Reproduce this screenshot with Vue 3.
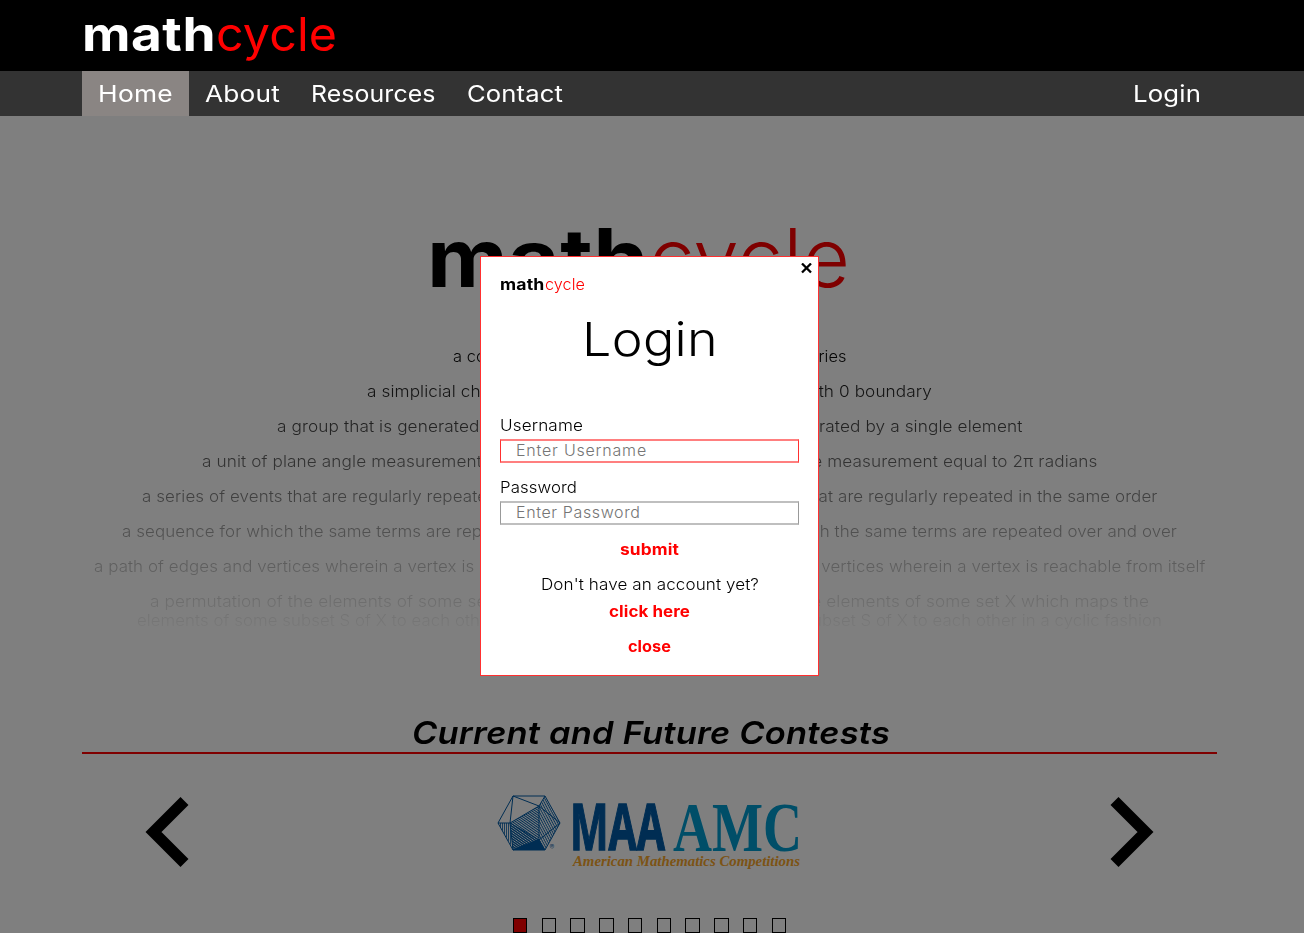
<script setup>
import { ref } from 'vue'

// Widens a run of text, slightly by tracking and mostly by stretching, to the given width.
const vFit = {
  mounted(el, { value }) {
    const natural = el.getBoundingClientRect().width
    el.style.letterSpacing = `${((value - natural) * 0.1) / el.textContent.length}px`
    const tracked = el.getBoundingClientRect().width
    el.style.transform = `scaleX(${value / tracked})`
    el.style.marginRight = `${value - tracked}px`
  }
}

const links = [
  { label: 'Home', box: 107, text: 75 },
  { label: 'About', box: 106, text: 75 },
  { label: 'Resources', box: 156, text: 124.5 },
  { label: 'Contact', box: 127, text: 96 }
]

const definitions = [
  [{ text: 'a complete set of stories', width: 188.5 }],
  [{ text: 'a simplicial chain with 0 boundary', width: 274 }],
  [{ text: 'a group that is generated by a single element', width: 364.5 }],
  [{ text: 'a unit of plane angle measurement equal to 2π radians', width: 439.5 }],
  [{ text: 'a series of events that are regularly repeated in the same order', width: 499.5 }],
  [{ text: 'a sequence for which the same terms are repeated over and over', width: 519 }],
  [{ text: 'a path of edges and vertices wherein a vertex is reachable from itself', width: 547.5 }],
  [
    { text: 'a permutation of the elements of some set X which maps the', width: 491 },
    { text: 'elements of some subset S of X to each other in a cyclic fashion', width: 504 }
  ]
]

const slide = ref(0)
const username = ref('')
const password = ref('')
</script>

<template>
  <div class="page">
    <header>
      <div class="brand">
        <span v-fit="134" class="math">math</span><span v-fit="121" class="cycle">cycle</span>
      </div>
      <nav>
        <a v-for="(l, i) in links" :key="l.label" :class="{ active: i === 0 }" :style="{ width: l.box + 'px' }"><span v-fit="l.text">{{ l.label }}</span></a>
        <a class="login-link"><span v-fit="68">Login</span></a>
      </nav>
    </header>

    <main>
      <h1 class="hero"><span v-fit="222" class="math">math</span><span v-fit="201" class="cycle">cycle</span></h1>
      <div class="definitions">
        <div v-for="(d, i) in definitions" :key="i" class="definition">
          <div v-for="line in d" :key="line.text" class="line">
            <span v-fit="line.width">{{ line.text }}</span>
            <span v-fit="line.width">{{ line.text }}</span>
          </div>
        </div>
      </div>

      <h2><span v-fit="478">Current and Future Contests</span></h2>

      <section class="carousel">
        <svg class="arrow" width="44" height="70" viewBox="0 0 44 70"><path d="M39.5 4 8.500 35l31 31" /></svg>
        <svg class="amc" width="308" height="80" viewBox="0 0 308 80">
          <defs>
            <pattern id="fine" width="2" height="2" patternUnits="userSpaceOnUse" patternTransform="rotate(35)"><path d="M0 .5h2" stroke="#005ba6" stroke-width="1.1" /></pattern>
            <pattern id="steep" width="2.2" height="2.2" patternUnits="userSpaceOnUse" patternTransform="rotate(62)"><path d="M0 .5h3" stroke="#005ba6" stroke-width=".9" /></pattern>
            <pattern id="upright" width="2" height="2" patternUnits="userSpaceOnUse"><path d="M.5 0v2" stroke="#005ba6" stroke-width=".8" /></pattern>
          </defs>
          <path fill="url(#fine)" d="M14 28 43 11v34L17 54z" />
          <path fill="url(#steep)" d="m43 11 6-10 15 27-21 17zM43 45l21-17-15 27z" />
          <path fill="url(#fine)" d="m14 28 29 17-26 9z" />
          <path fill="url(#upright)" d="M2 28h12l3 26z" />
          <path fill="#005ba6" d="m17 54 26-10 6 11H17z" />
          <path fill="none" stroke="#005ba6" stroke-width="1" d="M17 1h32l15 27-15 27H17L2 28zM17 1l26 10 6-10M17 1l-3 27H2M14 28l29-17v34zM14 28l3 27 26-10 21-17-21-17M43 45l6 10" />
          <text x="53.5" y="55" class="registered">®</text>
          <text x="74" y="55" class="maa" textLength="95" lengthAdjust="spacingAndGlyphs">MAA</text>
          <text x="177" y="55.5" class="contest" textLength="129" lengthAdjust="spacingAndGlyphs">AMC</text>
          <text x="77" y="71" class="tagline" textLength="227" lengthAdjust="spacingAndGlyphs">American Mathematics Competitions</text>
        </svg>
        <svg class="arrow" width="44" height="70" viewBox="0 0 44 70"><path d="m4.500 4 31 31-31 31" /></svg>
      </section>
      <div class="dots">
        <i v-for="n in 10" :key="n" :class="{ on: slide === n - 1 }" @click="slide = n - 1"></i>
      </div>
    </main>

    <div class="shade"></div>

    <form class="modal" @submit.prevent>
      <svg class="x" width="11" height="11" viewBox="0 0 11 11"><path d="m1 .5 9 9M10 .5l-9 9" /></svg>
      <div class="small-brand"><span v-fit="44.5" class="math">math</span><span v-fit="40" class="cycle">cycle</span></div>
      <div class="title"><span v-fit="136">Login</span></div>
      <label><span v-fit="83">Username</span></label>
      <div class="field focused"><input v-model="username" class="username" placeholder="Enter Username"></div>
      <label class="second"><span v-fit="77">Password</span></label>
      <div class="field"><input v-model="password" type="password" placeholder="Enter Password"></div>
      <div class="action submit"><span v-fit="59">submit</span></div>
      <div class="question"><span v-fit="218">Don't have an account yet?</span></div>
      <div class="action here"><span v-fit="81">click here</span></div>
      <div class="action close"><span v-fit="43">close</span></div>
    </form>
  </div>
</template>

<style>
body { margin: 0; overflow: hidden; }
</style>

<style scoped>
.page {
  position: relative;
  height: 933px;
  overflow: hidden;
  background: #fff;
  color: #000;
  font-family: Inter, "Open Sans", sans-serif;
  font-weight: 300;
  font-size: 15.5px;
}
span { display: inline-block; white-space: nowrap; transform-origin: left center; }
.math { font-weight: 700; }
.cycle { color: #f00; font-weight: 300; }
header { position: relative; z-index: 2; background: #000; height: 116px; }
.brand {
  box-sizing: border-box;
  height: 71px;
  padding-left: 82px;
  color: #fff;
  font-size: 47px;
  line-height: 68px;
}
.brand .cycle { font-weight: 400; }
nav { display: flex; height: 45px; padding: 0 87px 0 82px; background: #333; }
nav a {
  display: flex;
  justify-content: center;
  color: #fff;
  font-size: 23.3px;
  font-weight: 400;
  line-height: 45px;
}
nav a.active { background: #8a8583; }
nav .login-link { margin-left: auto; padding: 0 16px 0 15px; }

main { width: 1135px; margin-left: 82px; }
.hero {
  display: flex;
  justify-content: center;
  height: 231px;
  margin: 0 23px 0 0;
  padding-top: 94px;
  box-sizing: border-box;
  font-size: 80.5px;
  line-height: 95px;
}
.definitions {
  display: flex;
  flex-direction: column;
  gap: 16px;
  padding-bottom: 12px;
  -webkit-mask-image: linear-gradient(#000, transparent);
  mask-image: linear-gradient(#000, transparent);
}
.line { display: flex; justify-content: center; gap: 17px; height: 19px; line-height: 20px; }
h2 {
  display: flex;
  justify-content: center;
  height: 39px;
  margin: 71px 0 0;
  padding-left: 3px;
  border-bottom: 2px solid #f00;
  font-size: 31.5px;
  font-style: italic;
  font-weight: 600;
  line-height: 39px;
}
.carousel { display: flex; justify-content: space-between; height: 123px; padding: 41px 63px 0; box-sizing: border-box; }
.amc { overflow: visible; }
.arrow { margin-top: 2px; }
.arrow path { fill: none; stroke: #000; stroke-width: 11.3; }
.registered { fill: #005ba6; font-size: 7px; }
.maa { fill: #005ba6; stroke: #005ba6; stroke-width: 1.4; font: 700 64.5px "Open Sans", sans-serif; }
.contest { fill: #009cd0; font: 700 69px "Liberation Serif", serif; }
.tagline { fill: #f8a62b; font: italic 700 15px "Liberation Serif", serif; }
.dots { display: flex; justify-content: center; gap: 14.4px; margin-top: 41px; }
.dots i { box-sizing: border-box; width: 14.4px; height: 15px; border: 1px solid #000; }
.dots .on { background: #f00; }
.shade { position: absolute; inset: 0; background: rgba(0, 0, 0, .5); z-index: 1; }

.modal {
  position: absolute;
  z-index: 3;
  left: 480px;
  top: 256px;
  box-sizing: border-box;
  width: 339px;
  height: 420px;
  padding: 0 19px;
  border: 1px solid #ff3030;
  background: #fff;
}
.x { position: absolute; right: 6px; top: 6px; }
.x path { stroke: #000; stroke-width: 2.3; fill: none; }
.small-brand { padding-top: 18px; line-height: 20px; }
.title { display: flex; justify-content: center; margin-top: 14px; font-size: 47px; line-height: 60px; }
label { display: block; margin-top: 46px; line-height: 22px; }
label.second { margin-top: 14px; }
.field { box-sizing: border-box; height: 24px; margin-top: 2px; border: 1px solid #999; border-top: 2px solid #bfbfbf; border-bottom: 2px solid #bfbfbf; }
.field.focused { border-color: #ff7f7f #ff3030; }
input {
  display: block;
  box-sizing: border-box;
  width: 100%;
  height: 18px;
  padding: 0 15px;
  border: 0;
  outline: 0;
  background: none;
  font: inherit;
  font-size: 16px;
  letter-spacing: .62px;
}
.username { letter-spacing: .8px; }
input::placeholder { color: #757575; }
.action, .question { display: flex; justify-content: center; line-height: 20px; }
.action { color: #f00; font-weight: 700; }
.submit { margin-top: 15px; }
.question { margin-top: 15px; }
.here { margin-top: 7px; }
.close { margin-top: 15px; }
</style>
